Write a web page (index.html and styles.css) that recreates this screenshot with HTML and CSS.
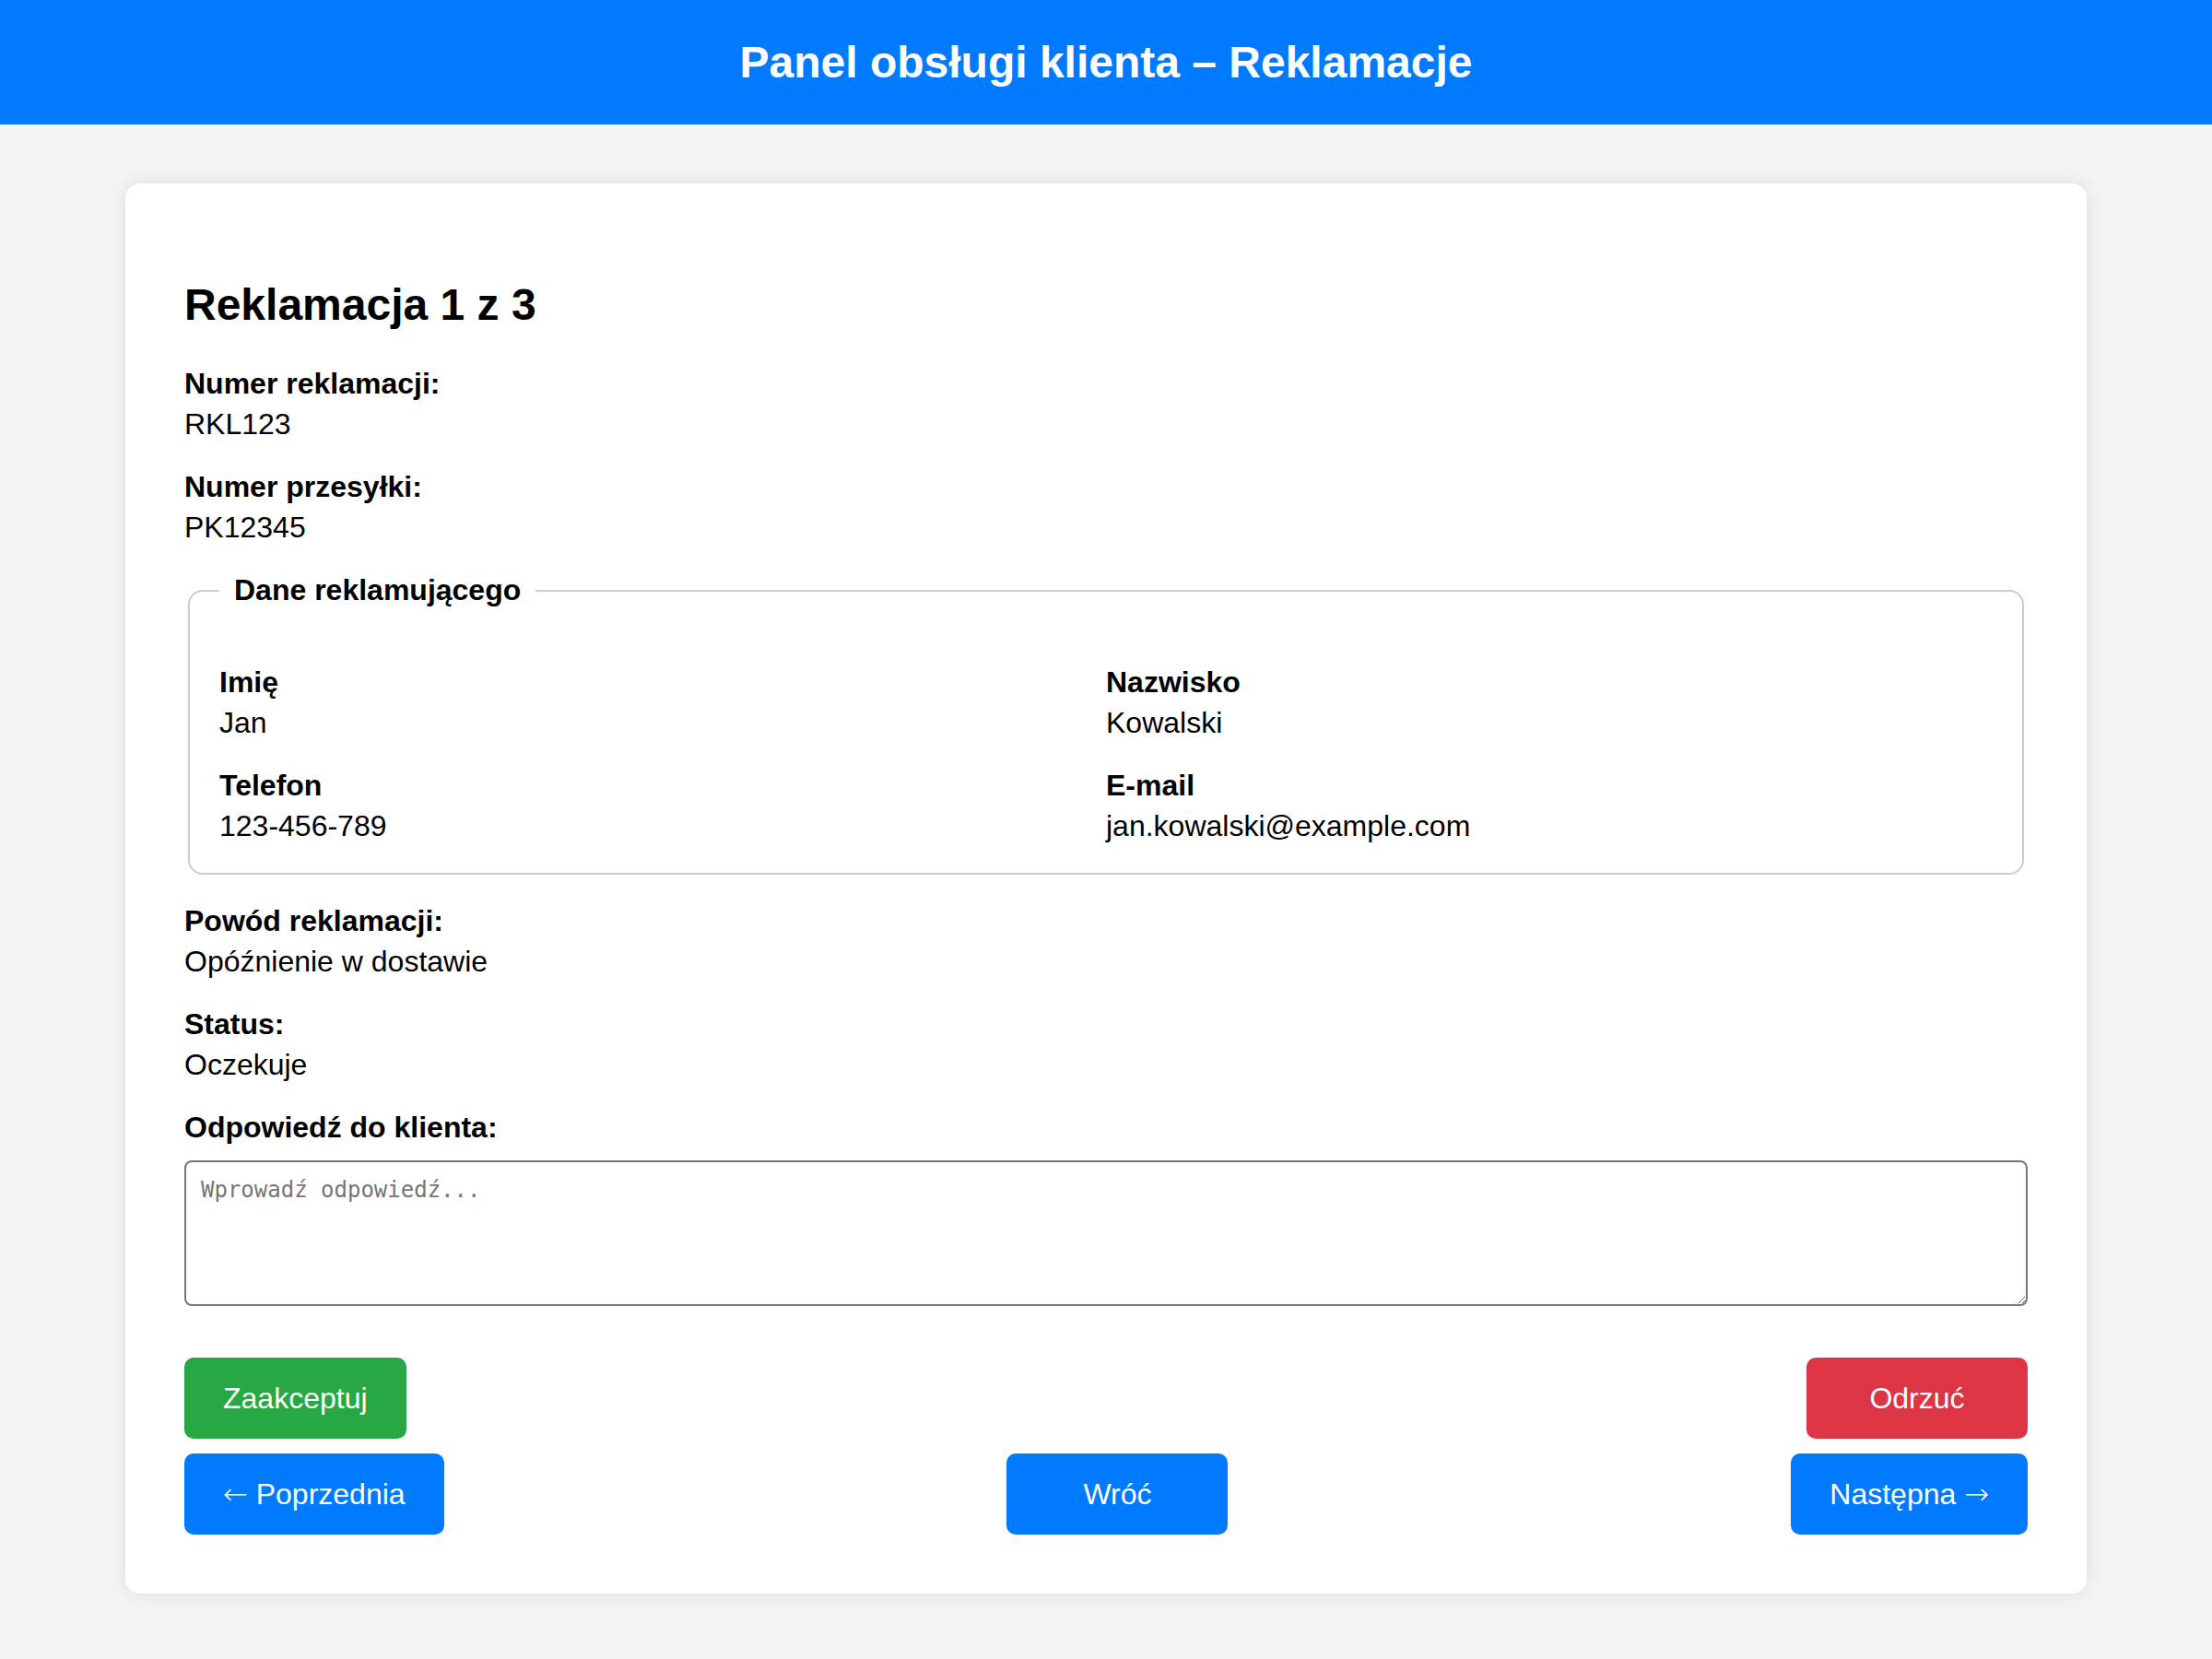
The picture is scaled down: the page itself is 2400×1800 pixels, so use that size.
FILE: index.html
```html
<!DOCTYPE html>
<html lang="pl">
<head>
<meta charset="utf-8">
<title>Panel obsługi klienta – Reklamacje</title>
<link rel="stylesheet" href="styles.css">
</head>
<body>
<header class="topbar">
  <h1 class="topbar-title">Panel obsługi klienta – Reklamacje</h1>
</header>
<main class="card">
  <h2 class="card-title">Reklamacja 1 z 3</h2>

  <div class="field">
    <span class="field-label">Numer reklamacji:</span>
    <span class="field-value">RKL123</span>
  </div>
  <div class="field">
    <span class="field-label">Numer przesyłki:</span>
    <span class="field-value">PK12345</span>
  </div>

  <fieldset class="group">
    <legend class="group-legend">Dane reklamującego</legend>
    <div class="group-grid">
      <div class="gfield">
        <span class="field-label">Imię</span>
        <span class="field-value">Jan</span>
      </div>
      <div class="gfield">
        <span class="field-label">Nazwisko</span>
        <span class="field-value">Kowalski</span>
      </div>
      <div class="gfield">
        <span class="field-label">Telefon</span>
        <span class="field-value">123-456-789</span>
      </div>
      <div class="gfield">
        <span class="field-label">E-mail</span>
        <span class="field-value">jan.kowalski@example.com</span>
      </div>
    </div>
  </fieldset>

  <div class="field">
    <span class="field-label">Powód reklamacji:</span>
    <span class="field-value">Opóźnienie w dostawie</span>
  </div>
  <div class="field">
    <span class="field-label">Status:</span>
    <span class="field-value">Oczekuje</span>
  </div>
  <div class="field field-last">
    <label class="field-label" for="reply">Odpowiedź do klienta:</label>
    <textarea id="reply" class="reply" placeholder="Wprowadź odpowiedź..."></textarea>
  </div>

  <div class="actions">
    <div class="row">
      <button class="btn btn-green">Zaakceptuj</button>
      <button class="btn btn-red">Odrzuć</button>
    </div>
    <div class="row">
      <button class="btn btn-blue"><span class="arrow">←</span> Poprzednia</button>
      <button class="btn btn-blue">Wróć</button>
      <button class="btn btn-blue">Następna <span class="arrow">→</span></button>
    </div>
  </div>
</main>
</body>
</html>
```

FILE: styles.css
```css
* {
  box-sizing: border-box;
}

html, body {
  margin: 0;
  padding: 0;
}

body {
  background: #f4f4f4;
  font-family: "Liberation Sans", Arial, sans-serif;
  color: #000;
}

.topbar {
  background: #007bff;
  padding: 40px 0;
  text-align: center;
}

.topbar-title {
  margin: 0;
  color: #fff;
  font-size: 48px;
  font-weight: bold;
}

.card {
  display: block;
  background: #fff;
  margin: 64px 136px;
  padding: 64px;
  border-radius: 16px;
  box-shadow: 0 0 20px rgba(0, 0, 0, 0.1);
}

.card-title {
  margin: 40px 0 40px;
  font-size: 48px;
  font-weight: bold;
}

.field {
  margin-bottom: 31px;
}

.field-last {
  margin-bottom: 0;
}

.field-label {
  display: block;
  font-size: 32px;
  font-weight: bold;
  margin-bottom: 7px;
}

.field-value {
  display: block;
  font-size: 32px;
}

.group {
  margin: 0 4px 32px;
  padding: 32px;
  border: 2px solid #ccc;
  border-radius: 16px;
}

.group-legend {
  padding: 0 16px;
  font-size: 32px;
  font-weight: bold;
}

.group-grid {
  display: grid;
  grid-template-columns: 1fr 1fr;
  row-gap: 31px;
  margin-top: 31px;
}

.reply {
  display: block;
  width: 100%;
  height: 158px;
  margin-top: 17px;
  padding: 16px;
  border: 2px solid #767676;
  border-radius: 8px;
  font-family: "DejaVu Sans Mono", monospace;
  font-size: 24px;
  resize: vertical;
}

.reply::placeholder {
  color: #757575;
}

.actions {
  display: flex;
  flex-direction: column;
  gap: 16px;
  margin-top: 56px;
}

.row {
  display: flex;
  justify-content: space-between;
  align-items: center;
}

.btn {
  min-width: 240px;
  padding: 24px 40px;
  border: 2px solid transparent;
  border-radius: 10px;
  font-family: "Liberation Sans", Arial, sans-serif;
  font-size: 32px;
  line-height: 36px;
  color: #fff;
  cursor: pointer;
  text-align: center;
}

.arrow {
  font-family: "DejaVu Sans", sans-serif;
  font-weight: 200;
}

.btn-green {
  background: #28a745;
  border-color: #28a745;
}

.btn-red {
  background: #dc3545;
  border-color: #dc3545;
}

.btn-blue {
  background: #007bff;
  border-color: #007bff;
}
```
